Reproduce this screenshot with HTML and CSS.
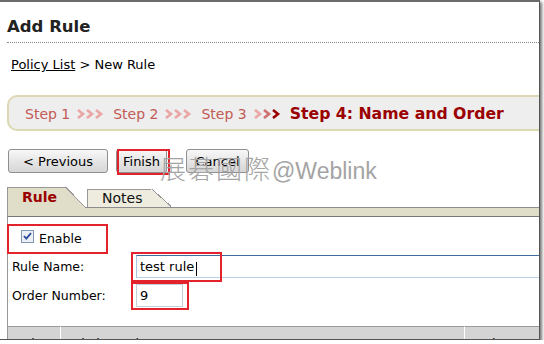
FILE: index.html
```html
<!DOCTYPE html>
<html lang="en">
<head>
    <meta charset="UTF-8">
    <meta name="viewport" content="width=device-width, initial-scale=1.0">
    <title>Add Rule</title>
    <link rel="stylesheet" href="styles.css">
</head>
<body>
<div class="window">
    <h1 class="page-title">Add Rule</h1>
    <div class="crumbs"><a href="#">Policy List</a> &gt; New Rule</div>

    <div class="steps">
        <span class="step">Step 1</span>
        <svg class="arrows" width="27" height="10" viewBox="0 0 27 10">
            <polyline points="1,1 6,5 1,9"/><polyline points="10,1 15,5 10,9"/><polyline points="19,1 24,5 19,9"/>
        </svg>
        <span class="step">Step 2</span>
        <svg class="arrows" width="27" height="10" viewBox="0 0 27 10">
            <polyline points="1,1 6,5 1,9"/><polyline points="10,1 15,5 10,9"/><polyline points="19,1 24,5 19,9"/>
        </svg>
        <span class="step">Step 3</span>
        <svg class="arrows arrows-last" width="27" height="10" viewBox="0 0 27 10">
            <polyline points="1,1 6,5 1,9"/><polyline class="mid" points="10,1 15,5 10,9"/><polyline class="end" points="19,1 24,5 19,9"/>
        </svg>
        <span class="step current">Step 4: Name and Order</span>
    </div>

    <div class="actions">
        <button class="btn btn-prev">&lt; Previous</button>
        <button class="btn btn-finish">Finish</button>
        <button class="btn btn-cancel">Cancel</button>
    </div>

    <div class="tabs">
        <div class="tab active">Rule</div>
        <div class="tab">Notes</div>
    </div>
    <div class="tab-band"></div>

    <div class="panel">
        <label class="check-row">
            <span class="checkbox">
                <svg width="13" height="13" viewBox="0 0 13 13">
                    <rect x="0.5" y="0.5" width="12" height="12" fill="#eceff4" stroke="#8197b3"/>
                    <polyline points="3,6 5.3,8.6 10,3.2" fill="none" stroke="#2b4aa0" stroke-width="1.8"/>
                </svg>
            </span>
            Enable
        </label>

        <div class="fields">
            <label>Rule Name:</label>
            <input class="text-input wide focused" type="text" value="test rule">
            <label>Order Number:</label>
            <input class="text-input short" type="text" value="9">
        </div>

        <table class="rules">
            <thead>
                <tr>
                    <th class="col-order">Order</th>
                    <th class="col-name">Existing Rules</th>
                    <th class="col-action">Action</th>
                </tr>
            </thead>
        </table>
    </div>

    <span class="caret"></span>

    <div class="mark mark-finish"></div>
    <div class="mark mark-enable"></div>
    <div class="mark mark-name"></div>
    <div class="mark mark-order"></div>

    <div class="watermark"><span class="cjk">展碁國際</span>@Weblink</div>
</div>
</body>
</html>
```

FILE: styles.css
```css
body {
    margin: 0;
    background: #fff;
    font-family: "DejaVu Sans", Verdana, sans-serif;
    color: #000;
}
.window {
    position: relative;
    width: 539px;
    height: 337px;
    border-top: 2px solid #6b6b6b;
    border-right: 1px solid #555;
    border-bottom: 1px solid #555;
    box-shadow: 2px 2px 3px rgba(0, 0, 0, 0.55);
    background: #fff;
    overflow: hidden;
}
.page-title {
    margin: 15px 0 0 7px;
    padding-bottom: 5px;
    border-bottom: 1px dotted #8a8a8a;
    font-size: 16.5px;
    line-height: 20px;
    color: #222;
}
.crumbs {
    margin: 14px 0 0 11px;
    font-size: 13px;
    line-height: 16px;
}
.crumbs a {
    color: #000;
}

/* wizard steps */
.steps {
    display: flex;
    align-items: center;
    box-sizing: border-box;
    height: 36px;
    margin: 22px -20px 0 7px;
    padding: 1px 0 0 16px;
    border: 2px solid #dcd8b2;
    border-right: none;
    border-radius: 10px 0 0 10px;
    background: #eeeeee;
}
.step {
    font-size: 14px;
    color: #c25a55;
}
.step.current {
    font-size: 15.7px;
    font-weight: bold;
    color: #9b0000;
}
.arrows {
    margin: 0 9px 0 7px;
}
.arrows polyline {
    fill: none;
    stroke: #eaa5a5;
    stroke-width: 2.6;
}
.arrows-last .mid {
    stroke: #cf6f6f;
}
.arrows-last .end {
    stroke: #9b0000;
}

/* buttons */
.actions {
    display: flex;
    margin: 18px 0 0 8px;
}
.btn {
    height: 24px;
    padding: 0;
    border: 1px solid #8f8f8f;
    border-radius: 3px;
    background: linear-gradient(to bottom, #f8f8f8, #e6e6e6 50%, #d6d6d6);
    font-family: "DejaVu Sans", Verdana, sans-serif;
    font-size: 13px;
    color: #000;
}
.btn-prev {
    width: 100px;
}
.btn-finish {
    width: 51px;
    margin-left: 8px;
}
.btn-cancel {
    width: 63px;
    margin-left: 19px;
}

/* tabs */
.tabs {
    display: flex;
    align-items: flex-end;
    margin: 14px 0 0 7px;
}
.tab {
    position: relative;
    box-sizing: border-box;
    height: 18px;
    width: 64px;
    margin-left: 22px;
    padding-left: 14px;
    border: 1px solid #989898;
    border-right: none;
    border-bottom: none;
    background: #edecde;
    font-size: 14px;
    line-height: 16px;
    color: #111;
}
.tab::after {
    content: "";
    position: absolute;
    top: -1px;
    right: -20px;
    width: 20px;
    height: calc(100% + 1px);
    background: linear-gradient(to bottom left, transparent calc(50% - 1px), #989898 calc(50% - 1px), #989898 50%, #edecde 50%);
}
.tab.active {
    z-index: 1;
    height: 21px;
    width: 58px;
    margin-left: 0;
    margin-bottom: -1px;
    background: #e0dec9;
    font-weight: bold;
    line-height: 18px;
    color: #9b0000;
}
.tab.active::after {
    background: linear-gradient(to bottom left, transparent calc(50% - 1px), #989898 calc(50% - 1px), #989898 50%, #e0dec9 50%);
}
.tab-band {
    height: 8px;
    margin-left: 7px;
    border-top: 1px solid #8c8c8c;
    border-bottom: 1px solid #777;
    border-left: 1px solid #989898;
    background: #e0dec9;
}

/* form panel */
.panel {
    margin-left: 7px;
    border-left: 1px solid #989898;
    height: 200px;
}
.check-row {
    display: flex;
    align-items: flex-start;
    gap: 5px;
    padding: 14px 0 0 13px;
    font-size: 12.5px;
    line-height: 16px;
}
.checkbox {
    display: block;
    height: 13px;
    margin-top: -1px;
}
.fields {
    display: grid;
    grid-template-columns: 124px 420px;
    row-gap: 6px;
    align-items: center;
    margin-top: 8px;
    padding-left: 4px;
    font-size: 12.5px;
}
.text-input {
    box-sizing: border-box;
    height: 23px;
    padding: 0 3px;
    border: 1px solid #c2d0de;
    font-family: "DejaVu Sans", Verdana, sans-serif;
    font-size: 13px;
    color: #000;
    outline: none;
}
.text-input.focused {
    border-color: #a9c5de;
    border-top-color: #3e6d9c;
    border-bottom-color: #b7d2e8;
}
.text-input.short {
    width: 47px;
}
.rules {
    margin-top: 19px;
    border-spacing: 0;
    width: 560px;
    font-size: 12.5px;
}
.rules th {
    height: 22px;
    padding: 9px 5px 0;
    border-top: 1px solid #9a9a9a;
    background: #d4d4d4;
    font-weight: normal;
    text-align: left;
    vertical-align: top;
    box-sizing: border-box;
}
.rules .col-order {
    width: 52px;
    padding-left: 4px;
}
.rules .col-name {
    width: 404px;
    border-left: 1px solid #fff;
}
.rules .col-action {
    border-left: 1px solid #fff;
    padding-left: 7px;
}

.caret {
    position: absolute;
    left: 196px;
    top: 260px;
    width: 1px;
    height: 14px;
    background: #000;
}

/* red annotation boxes */
.mark {
    position: absolute;
    box-sizing: border-box;
    border: 2px solid #e3232c;
}
.mark-finish {
    left: 117px;
    top: 147px;
    width: 53px;
    height: 26px;
}
.mark-enable {
    left: 7px;
    top: 222px;
    width: 101px;
    height: 30px;
}
.mark-name {
    left: 131px;
    top: 250px;
    width: 91px;
    height: 30px;
}
.mark-order {
    left: 131px;
    top: 280px;
    width: 58px;
    height: 28px;
}

.watermark {
    position: absolute;
    left: 160px;
    top: 151px;
    font-family: "Liberation Sans", Arial, sans-serif;
    font-size: 23px;
    line-height: 30px;
    color: #a4a4a4;
    white-space: nowrap;
}
.watermark .cjk {
    font-family: "Noto Sans CJK TC", sans-serif;
    font-weight: 300;
    font-size: 26px;
    letter-spacing: 2px;
}
```
